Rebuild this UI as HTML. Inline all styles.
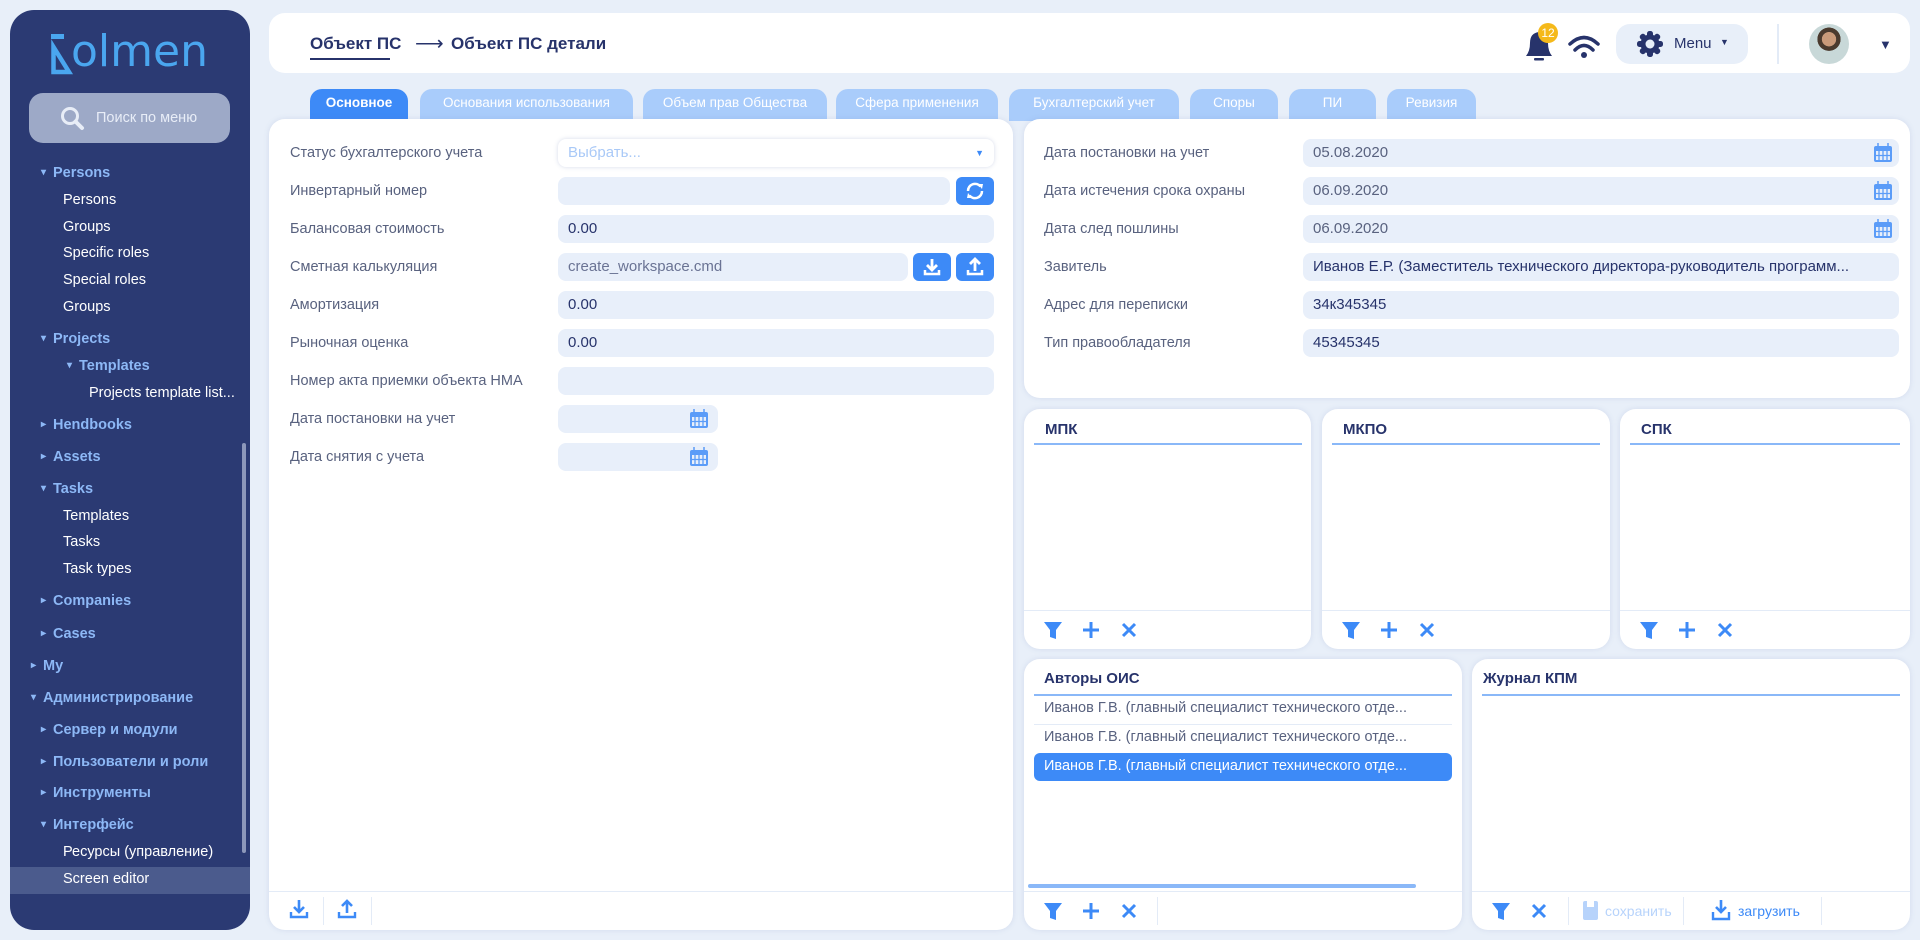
<!DOCTYPE html>
<html><head><meta charset="utf-8"><style>
*{box-sizing:border-box;margin:0;padding:0}
body{width:1920px;height:940px;background:#e8eff9;font-family:"Liberation Sans",sans-serif;position:relative;overflow:hidden;color:#27336b}
.abs{position:absolute}
#sb{left:10px;top:10px;width:240px;height:920px;background:#2b3a73;border-radius:24px;overflow:hidden}
.si{position:absolute;font-size:14.5px;color:#fff;white-space:nowrap;line-height:18px;transform:translateY(-9px)}
.sh{color:#8db8f6;font-weight:bold}
.sh:before{content:"▾";font-size:10px;position:absolute;left:-12px;top:0}
.sh.c:before{content:"▸"}
.card{position:absolute;background:#fff;border-radius:16px;box-shadow:0 0 6px rgba(90,110,170,.15)}
.tab{position:absolute;top:89px;height:32px;border-radius:12px 12px 0 0;background:#a9ccfb;color:#fff;font-size:13.5px;text-align:center;line-height:28px}
.lb{position:absolute;font-size:14.5px;color:#59627f;transform:translateY(-9px);line-height:18px;white-space:nowrap}
.in{position:absolute;height:28px;background:#e8effa;border-radius:8px;font-size:15px;line-height:28px;padding-left:10px;color:#27336b;white-space:nowrap;overflow:hidden}
.btn{position:absolute;width:38px;height:28px;background:#3d8af7;border-radius:6px}
.pt{position:absolute;font-size:15px;font-weight:bold;color:#27336b}
.ln{position:absolute;height:1.5px;background:#8ab8f8}
.ft{position:absolute;height:1px;background:#e3ebf7}
</style></head><body>
<div id="sb" class="abs">
 <div class="abs" style="left:61px;top:20px;font-size:44px;color:#4aa6ef;font-family:'DejaVu Sans',sans-serif;line-height:44px">olmen</div>
 <svg class="abs" style="left:40px;top:24px" width="24" height="42"><rect x="1" y="0" width="13" height="5" fill="#4aa6ef"/><path d="M3.5 38 L3.5 13 L19 38 Z" fill="none" stroke="#4aa6ef" stroke-width="4.5"/></svg>
 <div class="abs" style="left:19px;top:83px;width:201px;height:50px;background:#9da9c7;border-radius:14px"></div>
 <svg class="abs" style="left:50px;top:96px" width="26" height="26"><circle cx="10" cy="10" r="7.5" fill="none" stroke="#e8edf7" stroke-width="3"/><path d="M15.5 15.5 L22 22" stroke="#e8edf7" stroke-width="4" stroke-linecap="round"/></svg>
 <div class="abs" style="left:86px;top:100px;color:#e8edf7;font-size:14.5px">Поиск по меню</div>
 <div class="si sh" style="left:43px;top:163px">Persons</div>
 <div class="si" style="left:53px;top:190px">Persons</div>
 <div class="si" style="left:53px;top:217px">Groups</div>
 <div class="si" style="left:53px;top:243px">Specific roles</div>
 <div class="si" style="left:53px;top:270px">Special roles</div>
 <div class="si" style="left:53px;top:297px">Groups</div>
 <div class="si sh" style="left:43px;top:329px">Projects</div>
 <div class="si sh" style="left:69px;top:356px">Templates</div>
 <div class="si" style="left:79px;top:383px">Projects template list...</div>
 <div class="si sh c" style="left:43px;top:415px">Hendbooks</div>
 <div class="si sh c" style="left:43px;top:447px">Assets</div>
 <div class="si sh" style="left:43px;top:479px">Tasks</div>
 <div class="si" style="left:53px;top:506px">Templates</div>
 <div class="si" style="left:53px;top:532px">Tasks</div>
 <div class="si" style="left:53px;top:559px">Task types</div>
 <div class="si sh c" style="left:43px;top:591px">Companies</div>
 <div class="si sh c" style="left:43px;top:624px">Cases</div>
 <div class="si sh c" style="left:33px;top:656px">My</div>
 <div class="si sh" style="left:33px;top:688px">Администрирование</div>
 <div class="si sh c" style="left:43px;top:720px">Сервер и модули</div>
 <div class="si sh c" style="left:43px;top:752px">Пользователи и роли</div>
 <div class="si sh c" style="left:43px;top:783px">Инструменты</div>
 <div class="si sh" style="left:43px;top:815px">Интерфейс</div>
 <div class="si" style="left:53px;top:842px">Ресурсы (управление)</div>
 <div class="abs" style="left:0;top:857px;width:240px;height:27px;background:#4b5b8d"></div>
 <div class="si" style="left:53px;top:869px">Screen editor</div>
 <div class="abs" style="left:232px;top:433px;width:4px;height:410px;background:#8c97ba;border-radius:2px"></div>
</div>

<div class="card" style="left:269px;top:13px;width:1641px;height:60px;box-shadow:none">
 <div class="abs" style="left:41px;top:21px;font-size:17px;font-weight:bold">Объект ПС</div>
 <div class="abs" style="left:41px;top:45px;width:80px;height:2px;background:#27336b"></div>
 <div class="abs" style="left:146px;top:18px;font-size:20px">⟶</div>
 <div class="abs" style="left:182px;top:21px;font-size:17px;font-weight:bold">Объект ПС детали</div>
 <svg class="abs" style="left:1252px;top:12px" width="34" height="40"><path d="M5 31 Q9 26 9 18 Q9 8 18 7 Q27 8 27 18 Q27 26 31 31 Z" fill="#27336b"/><rect x="13" y="33" width="10" height="2.5" rx="1" fill="#27336b"/></svg>
 <div class="abs" style="left:1269px;top:10px;width:20px;height:20px;border-radius:50%;background:#f5b91a;color:#fff;font-size:12px;text-align:center;line-height:20px">12</div>
 <svg class="abs" style="left:1298px;top:18px" width="34" height="40"><path d="M3 13 Q17 0 31 13" fill="none" stroke="#27336b" stroke-width="3.5" stroke-linecap="round"/><path d="M8 19 Q17 10 26 19" fill="none" stroke="#27336b" stroke-width="3.5" stroke-linecap="round"/><circle cx="17" cy="24" r="3" fill="#27336b"/></svg>
 <div class="abs" style="left:1347px;top:11px;width:132px;height:40px;background:#e8eff9;border-radius:14px"></div>
 <svg class="abs" style="left:1367px;top:17px" width="28" height="28" viewBox="0 0 28 28"><g fill="#27336b"><circle cx="14" cy="14" r="9.5"/><rect x="11" y="1" width="6" height="26" rx="2.5"/><rect x="11" y="1" width="6" height="26" rx="2.5" transform="rotate(45 14 14)"/><rect x="11" y="1" width="6" height="26" rx="2.5" transform="rotate(90 14 14)"/><rect x="11" y="1" width="6" height="26" rx="2.5" transform="rotate(135 14 14)"/></g><circle cx="14" cy="14" r="4.5" fill="#e8eff9"/></svg>
 <div class="abs" style="left:1405px;top:22px;font-size:15px;color:#27336b">Menu</div>
 <div class="abs" style="left:1451px;top:24px;font-size:9px">▼</div>
 <div class="abs" style="left:1508px;top:11px;width:2px;height:40px;background:#e3ebf7"></div>
 <div class="abs" style="left:1540px;top:11px;width:40px;height:40px;border-radius:50%;background:radial-gradient(circle at 50% 38%,#c99a7a 0 22%,#4a3a2e 23% 36%,#c8d8d8 37% 100%)"></div>
 <div class="abs" style="left:1610px;top:24px;font-size:13px">▼</div>
</div>

<div class="tab" style="left:310px;width:98px;background:#3d8af7;font-weight:bold">Основное</div>
<div class="tab" style="left:420px;width:213px">Основания использования</div>
<div class="tab" style="left:643px;width:184px">Объем прав Общества</div>
<div class="tab" style="left:836px;width:162px">Сфера применения</div>
<div class="tab" style="left:1009px;width:170px">Бухгалтерский учет</div>
<div class="tab" style="left:1190px;width:88px">Споры</div>
<div class="tab" style="left:1289px;width:87px">ПИ</div>
<div class="tab" style="left:1387px;width:89px">Ревизия</div>

<div class="card" style="left:269px;top:119px;width:744px;height:811px"></div>
<div class="lb" style="left:290px;top:153px">Статус бухгалтерского учета</div>
<div class="in" style="left:558px;top:139px;width:436px;background:#fff;box-shadow:0 0 4px rgba(90,110,170,.25);color:#a9c9f7">Выбрать...<span style="position:absolute;right:10px;font-size:9px;color:#3d8af7">▼</span></div>
<div class="lb" style="left:290px;top:191px">Инвертарный номер</div>
<div class="in" style="left:558px;top:177px;width:392px"></div>
<div class="btn" style="left:956px;top:177px"><svg width="38" height="28"><path d="M12 14 A7 7 0 0 1 24.5 9.5" fill="none" stroke="#fff" stroke-width="2.5"/><path d="M26 14 A7 7 0 0 1 13.5 18.5" fill="none" stroke="#fff" stroke-width="2.5"/><path d="M22 7 L27 7 L26 12Z M16 21 L11 21 L12 16Z" fill="#fff"/></svg></div>
<div class="lb" style="left:290px;top:229px">Балансовая стоимость</div>
<div class="in" style="left:558px;top:215px;width:436px">0.00</div>
<div class="lb" style="left:290px;top:267px">Сметная калькуляция</div>
<div class="in" style="left:558px;top:253px;width:350px;color:#6a7394">create_workspace.cmd</div>
<div class="btn" style="left:913px;top:253px"><svg width="38" height="28"><path d="M19 6 V16 M14 12 L19 17 L24 12" fill="none" stroke="#fff" stroke-width="2.8"/><path d="M12 17 V21 H26 V17" fill="none" stroke="#fff" stroke-width="2.5"/></svg></div>
<div class="btn" style="left:956px;top:253px"><svg width="38" height="28"><path d="M19 18 V7 M14 11 L19 6 L24 11" fill="none" stroke="#fff" stroke-width="2.8"/><path d="M12 17 V21 H26 V17" fill="none" stroke="#fff" stroke-width="2.5"/></svg></div>
<div class="lb" style="left:290px;top:305px">Амортизация</div>
<div class="in" style="left:558px;top:291px;width:436px">0.00</div>
<div class="lb" style="left:290px;top:343px">Рыночная оценка</div>
<div class="in" style="left:558px;top:329px;width:436px">0.00</div>
<div class="lb" style="left:290px;top:381px">Номер акта приемки объекта НМА</div>
<div class="in" style="left:558px;top:367px;width:436px"></div>
<div class="lb" style="left:290px;top:419px">Дата постановки на учет</div>
<div class="in" style="left:558px;top:405px;width:160px"></div>
<div class="lb" style="left:290px;top:457px">Дата снятия с учета</div>
<div class="in" style="left:558px;top:443px;width:160px"></div>
<div class="ft" style="left:269px;top:891px;width:744px"></div>
<svg class="abs" style="left:288px;top:898px" width="22" height="22"><path d="M11 2 V13 M6 9 L11 14 L16 9" fill="none" stroke="#3d8af7" stroke-width="2.6"/><path d="M3 14 V19 H19 V14" fill="none" stroke="#3d8af7" stroke-width="2.4"/></svg>
<svg class="abs" style="left:336px;top:898px" width="22" height="22"><path d="M11 15 V4 M6 8 L11 3 L16 8" fill="none" stroke="#3d8af7" stroke-width="2.6"/><path d="M3 14 V19 H19 V14" fill="none" stroke="#3d8af7" stroke-width="2.4"/></svg>
<div class="abs" style="left:323px;top:897px;width:1px;height:28px;background:#e3ebf7"></div>
<div class="abs" style="left:371px;top:897px;width:1px;height:28px;background:#e3ebf7"></div>

<div class="card" style="left:1024px;top:119px;width:886px;height:279px"></div>
<div class="lb" style="left:1044px;top:153px">Дата постановки на учет</div>
<div class="in" style="left:1303px;top:139px;width:596px;color:#59627f">05.08.2020</div>
<div class="lb" style="left:1044px;top:191px">Дата истечения срока охраны</div>
<div class="in" style="left:1303px;top:177px;width:596px;color:#59627f">06.09.2020</div>
<div class="lb" style="left:1044px;top:229px">Дата след пошлины</div>
<div class="in" style="left:1303px;top:215px;width:596px;color:#59627f">06.09.2020</div>
<div class="lb" style="left:1044px;top:267px">Завитель</div>
<div class="in" style="left:1303px;top:253px;width:596px">Иванов Е.Р. (Заместитель технического директора-руководитель программ...</div>
<div class="lb" style="left:1044px;top:305px">Адрес для переписки</div>
<div class="in" style="left:1303px;top:291px;width:596px">34к345345</div>
<div class="lb" style="left:1044px;top:343px">Тип правообладателя</div>
<div class="in" style="left:1303px;top:329px;width:596px">45345345</div>

<div class="card" style="left:1024px;top:409px;width:287px;height:240px"></div>
<div class="card" style="left:1322px;top:409px;width:288px;height:240px"></div>
<div class="card" style="left:1620px;top:409px;width:290px;height:240px"></div>
<div class="pt" style="left:1045px;top:421px">МПК</div><div class="ln" style="left:1034px;top:443px;width:268px"></div>
<div class="pt" style="left:1343px;top:421px">МКПО</div><div class="ln" style="left:1332px;top:443px;width:268px"></div>
<div class="pt" style="left:1641px;top:421px">СПК</div><div class="ln" style="left:1630px;top:443px;width:270px"></div>
<div class="ft" style="left:1024px;top:610px;width:287px"></div>
<div class="ft" style="left:1322px;top:610px;width:288px"></div>
<div class="ft" style="left:1620px;top:610px;width:290px"></div>

<div class="card" style="left:1024px;top:659px;width:438px;height:271px"></div>
<div class="card" style="left:1472px;top:659px;width:438px;height:271px"></div>
<div class="pt" style="left:1044px;top:670px">Авторы ОИС</div><div class="ln" style="left:1034px;top:694px;width:418px"></div>
<div class="pt" style="left:1483px;top:670px">Журнал КПМ</div><div class="ln" style="left:1482px;top:694px;width:418px"></div>
<div class="abs" style="left:1044px;top:700px;font-size:14.5px;color:#59627f">Иванов Г.В. (главный специалист технического отде...</div>
<div class="abs" style="left:1034px;top:724px;width:418px;height:1px;background:#e3ebf7"></div>
<div class="abs" style="left:1044px;top:729px;font-size:14.5px;color:#59627f">Иванов Г.В. (главный специалист технического отде...</div>
<div class="abs" style="left:1034px;top:753px;width:418px;height:28px;background:#3d8af7;border-radius:6px"></div>
<div class="abs" style="left:1044px;top:758px;font-size:14.5px;color:#fff">Иванов Г.В. (главный специалист технического отде...</div>
<div class="abs" style="left:1028px;top:884px;width:388px;height:4px;background:#8ab8f8;border-radius:2px"></div>
<div class="ft" style="left:1024px;top:891px;width:438px"></div>
<div class="ft" style="left:1472px;top:891px;width:438px"></div>
<div class="abs" style="left:1157px;top:897px;width:1px;height:28px;background:#e3ebf7"></div>
<div class="abs" style="left:1568px;top:897px;width:1px;height:28px;background:#e3ebf7"></div>
<div class="abs" style="left:1683px;top:897px;width:1px;height:28px;background:#e3ebf7"></div>
<div class="abs" style="left:1821px;top:897px;width:1px;height:28px;background:#e3ebf7"></div>

<svg width="1920" height="940" class="abs" style="left:0;top:0;pointer-events:none">
<defs>
<g id="f"><path d="M-9 -8 H9 L3 0 V9 L-3 7 V0 Z" fill="#3d8af7"/></g>
<g id="p"><path d="M-8 0 H8 M0 -8 V8" stroke="#3d8af7" stroke-width="3"/></g>
<g id="x"><path d="M-6 -6 L6 6 M6 -6 L-6 6" stroke="#3d8af7" stroke-width="3"/></g>
<g id="c"><rect x="-9" y="-7" width="18" height="16" rx="2" fill="#5b9cf8"/><rect x="-7" y="-2" width="14" height="9" fill="#e8effa"/><path d="M-4 -2 V7 M0 -2 V7 M4 -2 V7 M-7 2.5 H7" stroke="#5b9cf8" stroke-width="1.3"/><path d="M-5 -10 V-5 M5 -10 V-5" stroke="#5b9cf8" stroke-width="1.5"/></g>
</defs>
<use href="#c" x="699" y="419"/><use href="#c" x="699" y="457"/>
<use href="#c" x="1883" y="153"/><use href="#c" x="1883" y="191"/><use href="#c" x="1883" y="229"/>
<use href="#f" x="1053" y="630"/><use href="#p" x="1091" y="630"/><use href="#x" x="1129" y="630"/>
<use href="#f" x="1351" y="630"/><use href="#p" x="1389" y="630"/><use href="#x" x="1427" y="630"/>
<use href="#f" x="1649" y="630"/><use href="#p" x="1687" y="630"/><use href="#x" x="1725" y="630"/>
<use href="#f" x="1053" y="911"/><use href="#p" x="1091" y="911"/><use href="#x" x="1129" y="911"/>
<use href="#f" x="1501" y="911"/><use href="#x" x="1539" y="911"/>
<rect x="1583" y="901" width="15" height="19" rx="2" fill="#b7d3fb"/><rect x="1587" y="901" width="7" height="6" fill="#fff"/>
<path d="M1721 900 V912 M1716 907 L1721 912 L1726 907" fill="none" stroke="#3d8af7" stroke-width="2.6"/><path d="M1713 912 V919 H1729 V912" fill="none" stroke="#3d8af7" stroke-width="2.4"/>
</svg>
<div class="abs" style="left:1605px;top:903px;font-size:14px;color:#b7d3fb">сохранить</div>
<div class="abs" style="left:1738px;top:903px;font-size:14px;color:#3d8af7">загрузить</div>
</body></html>
